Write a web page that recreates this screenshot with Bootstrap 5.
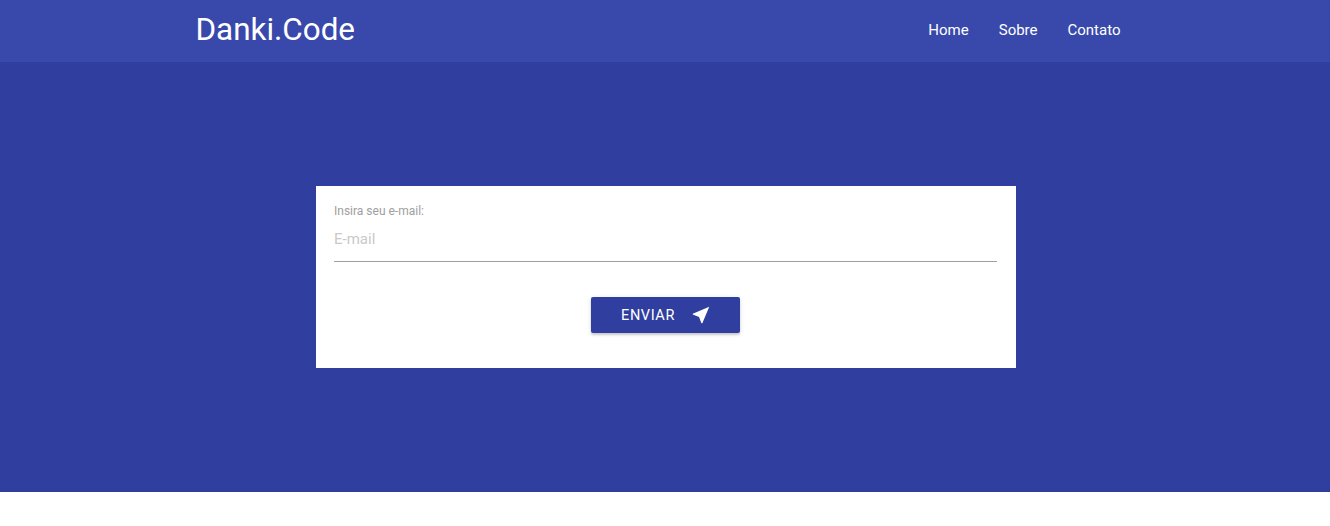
<!DOCTYPE html>
<html lang="pt-BR">
<head>
  <meta charset="UTF-8" />
  <meta name="viewport" content="width=device-width, initial-scale=1.0"/>
  <title>Danki.Code</title>
  <link rel="stylesheet" href="https://cdn.jsdelivr.net/npm/bootstrap@5.3.0/dist/css/bootstrap.min.css" />
  <style>
    body { font-family: Roboto, "Liberation Sans", sans-serif; background: #fff; }
    .top-bar { height: 62px; background: #3949ab; padding: 0; }
    .top-inner { width: 941px; margin: 0 auto; padding: 0 0 2px 1px; }
    .top-bar .navbar-brand { font-size: 31.4px; color: #fff; padding: 0; margin: 0; line-height: 60px; }
    .top-bar .nav-link { color: #fff; font-size: 15px; font-weight: 400; padding: 0 15px; line-height: 60px; }
    .hero { height: 430px; background: #303f9f; padding-left: 2px; }
    .mail-box { width: 700px; height: 182px; background: #fff; padding: 18px 19px 0 18px; }
    .mail-label { font-size: 12px; line-height: 14px; color: #9e9e9e; margin: 0; display: block; }
    .mail-input { font-size: 15px; height: 44px; padding: 0 0 2px; border: 0; border-bottom: 1px solid #9e9e9e; border-radius: 0; color: #333; box-shadow: none; background: transparent; }
    .mail-input::placeholder { color: #c9c9c9; opacity: 1; }
    .send-btn { width: 149px; height: 36px; background: #303f9f; color: #fff; border: 0; border-radius: 2px; font-size: 14.5px; font-weight: 400; letter-spacing: .6px; line-height: 1; box-shadow: 0 2px 2px rgba(0,0,0,.14), 0 1px 5px rgba(0,0,0,.12); margin-top: 35px; padding: 2px 0 0 2px; gap: 15px; }
    .send-btn svg { margin-top: -2px; }
    .send-btn:hover { background: #303f9f; color: #fff; }
  </style>
</head>
<body>
  <nav class="navbar top-bar">
    <div class="top-inner d-flex justify-content-between align-items-center">
      <a class="navbar-brand" href="#">Danki.Code</a>
      <ul class="nav">
        <li class="nav-item"><a class="nav-link" href="#">Home</a></li>
        <li class="nav-item"><a class="nav-link" href="#">Sobre</a></li>
        <li class="nav-item"><a class="nav-link" href="#">Contato</a></li>
      </ul>
    </div>
  </nav>

  <section class="hero d-flex justify-content-center align-items-center">
    <form class="mail-box" onsubmit="return false">
      <label class="mail-label" for="email">Insira seu e-mail:</label>
      <input type="email" id="email" class="form-control mail-input" placeholder="E-mail" />
      <div class="text-center">
        <button type="submit" class="btn send-btn d-inline-flex align-items-center justify-content-center">
          ENVIAR
          <svg width="22" height="22" viewBox="0 0 24 24" fill="#fff"><path d="M21 3L3 10.53v.98l6.84 2.65L12.48 21h.98L21 3z"/></svg>
        </button>
      </div>
    </form>
  </section>

  <script src="https://cdn.jsdelivr.net/npm/bootstrap@5.3.0/dist/js/bootstrap.bundle.min.js"></script>
</body>
</html>
